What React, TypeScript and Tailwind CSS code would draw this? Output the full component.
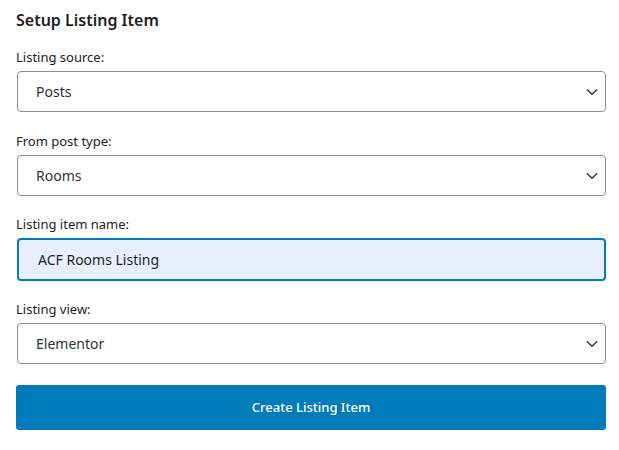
import { useState } from 'react';

function Chevron() {
  return (
    <svg width="12" height="7" viewBox="0 0 12 7" className="absolute right-[8px] top-1/2 -translate-y-1/2 pointer-events-none" fill="none">
      <path d="M1 1l5 4.8 5-4.8" stroke="#2c3338" strokeWidth="1.4" />
    </svg>
  );
}

function SelectField({ label, value, options }: { label: string; value: string; options: string[] }) {
  const [v, setV] = useState(value);
  return (
    <div className="flex flex-col">
      <label className="text-[13px] leading-[18px] text-[#1e1e1e] mb-[5px]">{label}</label>
      <div className="relative ml-px">
        <select
          value={v}
          onChange={e => setV(e.target.value)}
          className="appearance-none w-full h-[41px] border border-[#8c8f94] rounded-[4px] bg-white pl-[18px] pr-8 text-[14px] text-[#2c3338] focus:outline-none"
        >
          {options.map(o => (
            <option key={o} value={o}>{o}</option>
          ))}
        </select>
        <Chevron />
      </div>
    </div>
  );
}

export default function App() {
  const [name, setName] = useState('ACF Rooms Listing');

  return (
    <div className="w-[619px] h-[450px] bg-white pl-4 pr-[13px] pt-[9px] font-['Segoe_UI','Noto_Sans',sans-serif]">
      <h2 className="text-[16px] leading-[22px] font-semibold text-[#1e1e1e] mb-[17px]">Setup Listing Item</h2>

      <div className="flex flex-col gap-[20px]">
        <SelectField label="Listing source:" value="Posts" options={['Posts', 'Terms', 'Users']} />
        <SelectField label="From post type:" value="Rooms" options={['Rooms', 'Posts', 'Pages']} />

        <div className="flex flex-col -mt-px">
          <label className="text-[13px] leading-[18px] text-[#1e1e1e] mb-[5px]">Listing item name:</label>
          <input
            type="text"
            value={name}
            onChange={e => setName(e.target.value)}
            className="ml-px h-[43px] border-2 border-[#007cba] rounded-[4px] bg-[#e8f0fe] px-[19px] text-[14px] text-[#1e1e1e] focus:outline-none"
          />
        </div>

        <div className="-mt-px">
          <SelectField label="Listing view:" value="Elementor" options={['Elementor', 'Blocks']} />
        </div>
      </div>

      <button
        type="button"
        className="mt-[21px] w-full h-[45px] rounded-[3px] bg-[#007cba] hover:bg-[#006ba1] text-white text-[13px] font-medium"
      >
        Create Listing Item
      </button>
    </div>
  );
}
